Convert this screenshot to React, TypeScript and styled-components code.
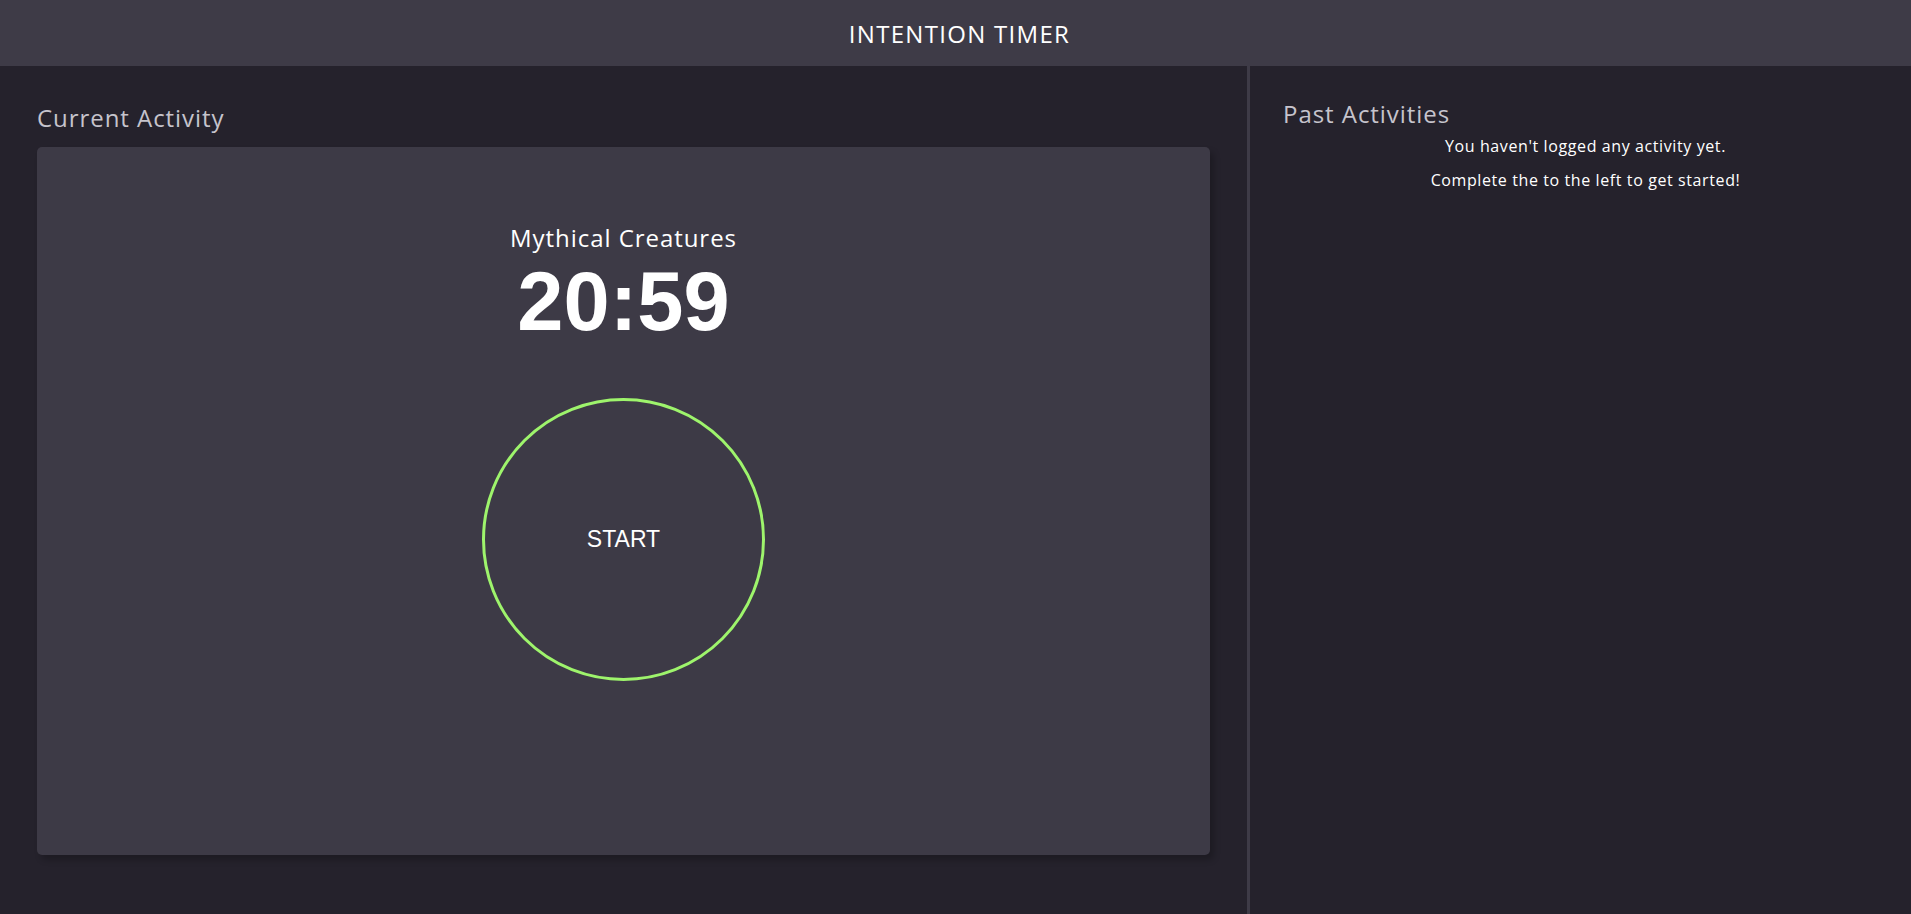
import React from "react";
import styled, { createGlobalStyle } from "styled-components";

const GlobalStyle = createGlobalStyle`
  html, body {
    margin: 0;
    padding: 0;
    background: #25222c;
  }
  * { box-sizing: border-box; }
`;

const Page = styled.div`
  min-height: 100vh;
  display: flex;
  flex-direction: column;
  background: #25222c;
  font-family: "Open Sans", "Noto Sans", sans-serif;
`;

const Header = styled.header`
  height: 66px;
  flex: none;
  display: flex;
  align-items: center;
  justify-content: center;
  padding-left: 8px;
  background: #3e3b47;
`;

const Title = styled.h1`
  margin: 0;
  font-size: 24px;
  font-weight: 400;
  color: #ffffff;
  letter-spacing: 1.3px;
`;

const Main = styled.main`
  flex: 1;
  display: grid;
  grid-template-columns: 1247px 1fr;
`;

const LeftPanel = styled.section`
  padding: 37px 37px 0;
`;

const RightPanel = styled.section`
  border-left: 3px solid #3e3b47;
  padding: 33px 33px 0;
`;

const SectionTitle = styled.h2`
  margin: 0;
  font-size: 24px;
  line-height: 30px;
  font-weight: 400;
  color: #c6c4cc;
  letter-spacing: 0.95px;
`;

const Card = styled.div`
  margin-top: 14px;
  height: 708px;
  background: #3d3a46;
  border-radius: 5px;
  box-shadow: 4px 5px 6px rgba(0, 0, 0, 0.22);
  display: flex;
  flex-direction: column;
  align-items: center;
  padding-top: 76px;
`;

const ActivityName = styled.p`
  margin: 0;
  font-size: 24px;
  line-height: 30px;
  color: #ffffff;
  letter-spacing: 0.95px;
`;

const Countdown = styled.p`
  margin: 7px 0 0;
  font-family: "Liberation Sans", Arial, sans-serif;
  font-weight: 700;
  font-size: 83px;
  line-height: 83px;
  color: #ffffff;
`;

const StartButton = styled.button`
  margin-top: 55px;
  width: 283px;
  height: 283px;
  border-radius: 50%;
  border: 3px solid #9ef46c;
  background: transparent;
  color: #ffffff;
  font-family: "Liberation Sans", Arial, sans-serif;
  font-size: 23px;
  display: flex;
  align-items: center;
  justify-content: center;
  cursor: pointer;
  padding: 0;
`;

const EmptyText = styled.div`
  margin-top: 7px;
  padding-left: 10px;
  display: flex;
  flex-direction: column;
  align-items: center;
  gap: 14px;
`;

const EmptyLine = styled.p`
  margin: 0;
  font-size: 16px;
  line-height: 20px;
  color: #ffffff;
  letter-spacing: 0.6px;
`;

export default function App() {
  return (
    <>
      <GlobalStyle />
      <Page>
        <Header>
          <Title>INTENTION TIMER</Title>
        </Header>
        <Main>
          <LeftPanel>
            <SectionTitle>Current Activity</SectionTitle>
            <Card>
              <ActivityName>Mythical Creatures</ActivityName>
              <Countdown>20:59</Countdown>
              <StartButton>START</StartButton>
            </Card>
          </LeftPanel>
          <RightPanel>
            <SectionTitle>Past Activities</SectionTitle>
            <EmptyText>
              <EmptyLine>You haven't logged any activity yet.</EmptyLine>
              <EmptyLine>Complete the to the left to get started!</EmptyLine>
            </EmptyText>
          </RightPanel>
        </Main>
      </Page>
    </>
  );
}
